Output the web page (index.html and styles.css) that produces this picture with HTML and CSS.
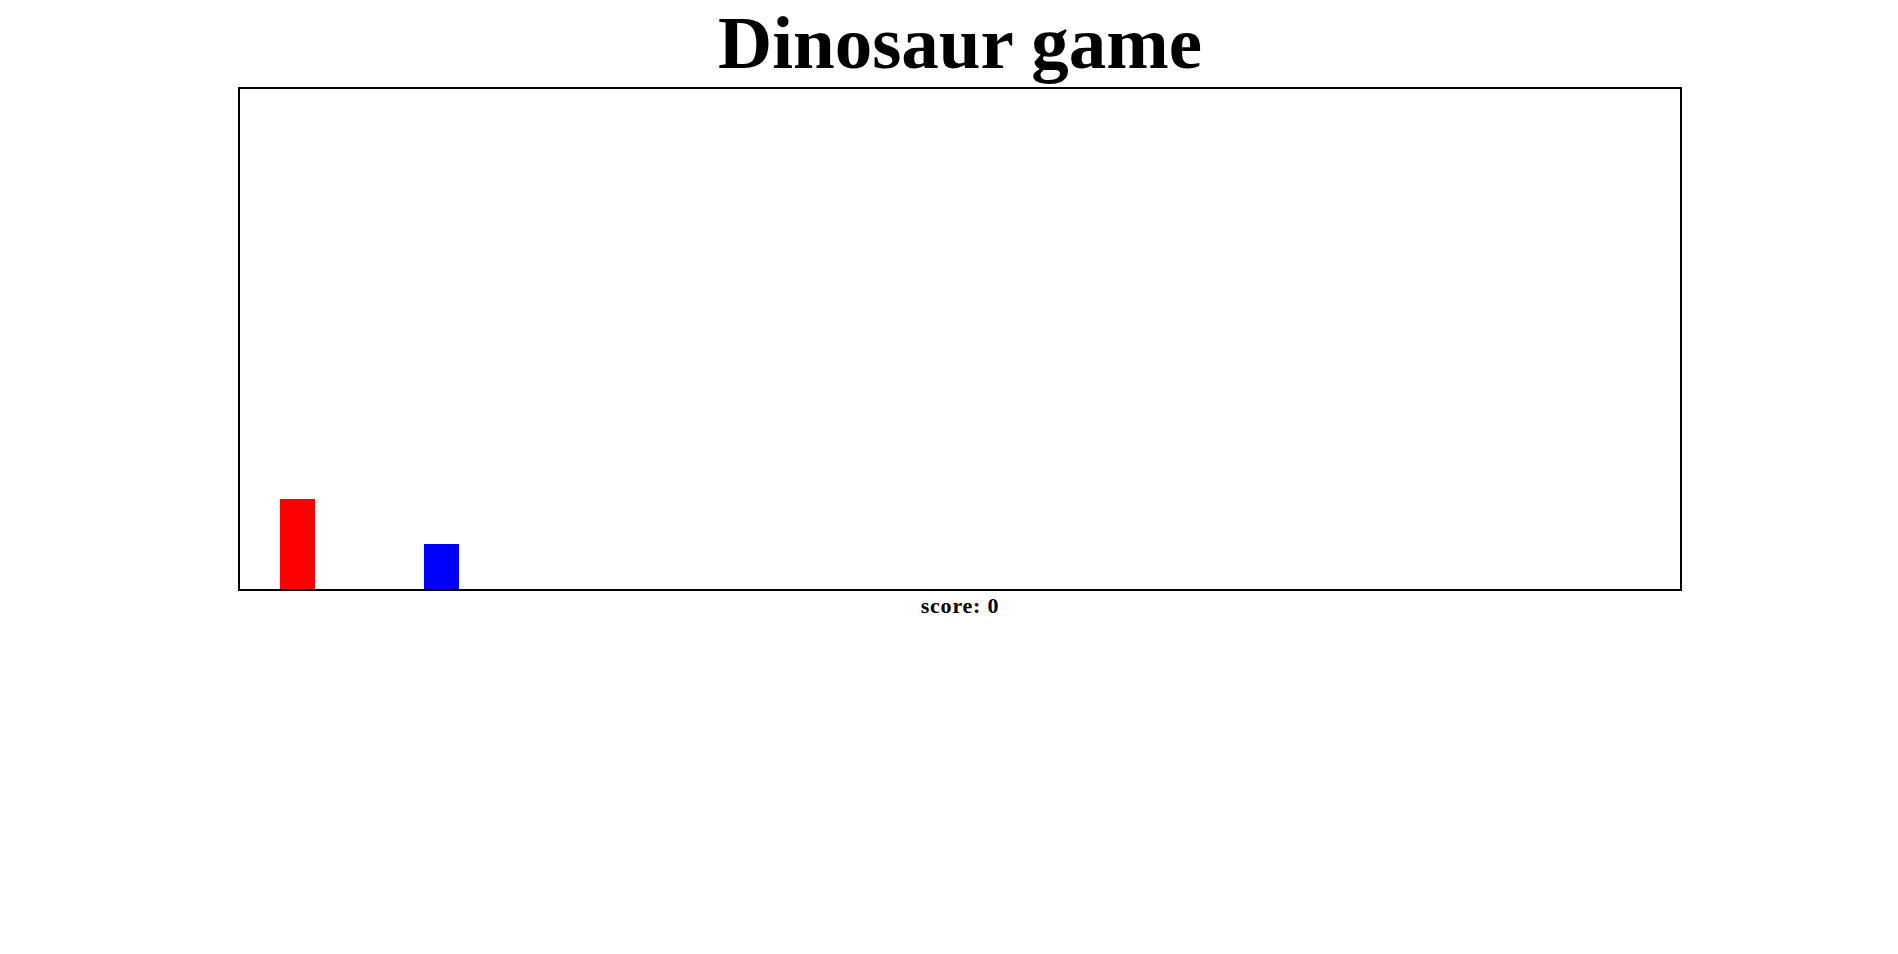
FILE: index.html
```html
<!DOCTYPE html>
<html>
<head>
<meta charset="utf-8">
<link rel="stylesheet" href="styles.css">
</head>
<body>
<div class="page">
  <h1 class="title">Dinosaur game</h1>
  <div class="game">
    <div class="dino"></div>
    <div class="cactus"></div>
  </div>
  <div class="score">score: 0</div>
</div>
</body>
</html>
```

FILE: styles.css
```css
body {
  margin: 8px;
  font-family: "Liberation Serif", "Times New Roman", serif;
  background: #fff;
  color: #000;
}
.page {
  padding-left: 22px;
  display: flex;
  flex-direction: column;
  align-items: center;
}
.title {
  margin: -9px 0 0 0;
  font-size: 75px;
  font-weight: bold;
  line-height: 88px;
}
.game {
  height: 500px;
  border: 2px solid #000;
  display: flex;
  align-items: flex-end;
  padding-left: 40px;
  box-sizing: content-box;
  width: 1400px;
}
.dino {
  width: 35px;
  height: 90px;
  background: #f00;
}
.cactus {
  width: 35px;
  height: 45px;
  background: #00f;
  margin-left: 109px;
}
.score {
  font-size: 22px;
  letter-spacing: 0.8px;
  font-weight: bold;
  margin-top: 2px;
}
```
